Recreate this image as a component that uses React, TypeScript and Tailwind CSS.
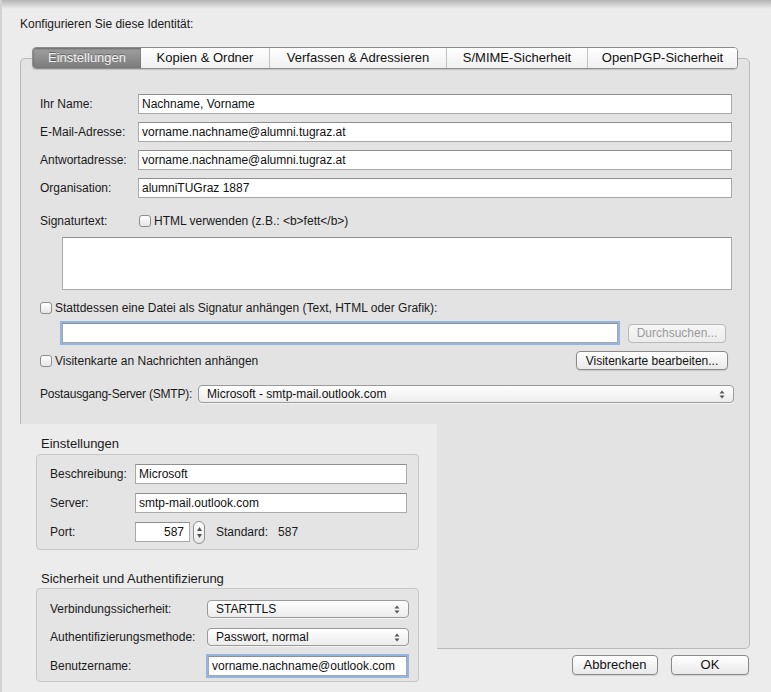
import React from 'react';

const FONT = "font-['Liberation_Sans',Arial,sans-serif]";

function Field({ value, className = '', focus = false, right = false }: { value: string; className?: string; focus?: boolean; right?: boolean }) {
  return (
    <div
      className={`h-[20px] bg-white border border-[#a9a9a9] border-t-[#8f8f8f] px-[3px] text-[12px] leading-[18px] text-[#111] whitespace-nowrap overflow-hidden ${
        right ? 'text-right pr-[5px]' : ''
      } ${focus ? 'border-[#5f93d3] shadow-[0_0_0_2px_rgba(122,166,222,0.75)]' : ''} ${className}`}
    >
      {value}
    </div>
  );
}

function Check() {
  return (
    <span className="inline-block w-[12px] h-[12px] shrink-0 rounded-[3px] border border-[#8c8c8c] bg-gradient-to-b from-white to-[#e6e6e6] shadow-[inset_0_1px_0_#fff]" />
  );
}

function Arrows() {
  return (
    <svg width="6" height="9" viewBox="0 0 6 9" className="shrink-0">
      <path d="M3 0.5 L5.5 3.5 H0.5 Z" fill="#555" />
      <path d="M3 8.5 L5.5 5.5 H0.5 Z" fill="#555" />
    </svg>
  );
}

function Select({ value, className = '' }: { value: string; className?: string }) {
  return (
    <div
      className={`h-[18px] flex items-center justify-between rounded-[4px] border border-[#9a9a9a] bg-gradient-to-b from-white to-[#ececec] shadow-[0_1px_0_rgba(255,255,255,0.6)] pl-[8px] pr-[8px] text-[12px] leading-[16px] text-[#111] ${className}`}
    >
      <span>{value}</span>
      <Arrows />
    </div>
  );
}

function Button({ label, className = '', disabled = false, size = 'text-[12px]' }: { label: string; className?: string; disabled?: boolean; size?: string }) {
  return (
    <div
      className={`h-[19px] flex items-center justify-center rounded-[4px] border ${size} ${
        disabled
          ? 'border-[#b9b9b9] bg-gradient-to-b from-[#f6f6f6] to-[#ececec] text-[#9a9a9a]'
          : 'border-[#8a8a8a] bg-gradient-to-b from-white to-[#e9e9e9] text-[#111] shadow-[0_1px_1px_rgba(0,0,0,0.12)]'
      } ${className}`}
    >
      {label}
    </div>
  );
}

const TABS: { label: string; w: string }[] = [
  { label: 'Einstellungen', w: 'w-[108px]' },
  { label: 'Kopien & Ordner', w: 'w-[128px]' },
  { label: 'Verfassen & Adressieren', w: 'w-[177px]' },
  { label: 'S/MIME-Sicherheit', w: 'w-[141px]' },
  { label: 'OpenPGP-Sicherheit', w: 'w-[150px]' },
];

function Tabs() {
  return (
    <div className="-mt-[12px] ml-[11px] w-[706px] h-[22px] flex rounded-[4px] border border-[#8e8e8e] overflow-hidden shadow-[0_1px_1px_rgba(0,0,0,0.15)]">
      {TABS.map((t, i) => (
        <div
          key={t.label}
          className={`${t.w} h-full flex items-center justify-center text-[13px] leading-[20px] ${
            i === 0
              ? 'bg-gradient-to-b from-[#a0a0a0] to-[#7c7c7c] text-[#f4f4f4] [text-shadow:0_-1px_0_rgba(0,0,0,0.35)] shadow-[inset_0_1px_2px_rgba(0,0,0,0.35)]'
              : 'bg-gradient-to-b from-white to-[#f0f0f0] text-[#111]'
          } ${i > 1 ? 'border-l border-[#c2c2c2]' : ''}`}
        >
          {t.label}
        </div>
      ))}
    </div>
  );
}

const IDENTITY: [string, string][] = [
  ['Ihr Name:', 'Nachname, Vorname'],
  ['E-Mail-Adresse:', 'vorname.nachname@alumni.tugraz.at'],
  ['Antwortadresse:', 'vorname.nachname@alumni.tugraz.at'],
  ['Organisation:', 'alumniTUGraz 1887'],
];

function SmtpPanel() {
  return (
    <div className="absolute left-[1px] top-[424px] w-[434px] h-[268px] bg-[#ececec] text-[12px] text-[#1a1a1a]">
      <div className="pt-[12px] pl-[38px] text-[13px] leading-[16px]">Einstellungen</div>
      <div className="mt-[2px] ml-[33px] w-[383px] rounded-[4px] border border-[#c6c6c6] bg-[#e4e4e4] pl-[13px] pr-[11px] pt-[9px] pb-[7px]">
        <div className="flex flex-col gap-[9px]">
          <div className="flex items-center">
            <span className="w-[85px] shrink-0">Beschreibung:</span>
            <Field value="Microsoft" className="flex-1" />
          </div>
          <div className="flex items-center">
            <span className="w-[85px] shrink-0">Server:</span>
            <Field value="smtp-mail.outlook.com" className="flex-1" />
          </div>
          <div className="flex items-center h-[20px]">
            <span className="w-[85px] shrink-0">Port:</span>
            <Field value="587" right className="w-[55px]" />
            <div className="ml-[3px] w-[12px] h-[23px] rounded-[6px] border border-[#8f8f8f] bg-gradient-to-b from-white to-[#e8e8e8] flex flex-col items-center justify-center gap-[3px]">
              <svg width="5" height="4" viewBox="0 0 5 4"><path d="M2.5 0 L5 4 H0 Z" fill="#555" /></svg>
              <svg width="5" height="4" viewBox="0 0 5 4"><path d="M2.5 4 L5 0 H0 Z" fill="#555" /></svg>
            </div>
            <span className="ml-[11px]">Standard:</span>
            <span className="ml-[10px]">587</span>
          </div>
        </div>
      </div>

      <div className="mt-[21px] pl-[38px] text-[13px] leading-[16px]">Sicherheit und Authentifizierung</div>
      <div className="mt-[1px] ml-[33px] w-[383px] rounded-[4px] border border-[#c6c6c6] bg-[#e4e4e4] pl-[13px] pr-[9px] pt-[11px] pb-[5px]">
        <div className="flex items-center">
          <span className="w-[157px] shrink-0">Verbindungssicherheit:</span>
          <Select value="STARTTLS" className="flex-1" />
        </div>
        <div className="flex items-center mt-[10px]">
          <span className="w-[157px] shrink-0">Authentifizierungsmethode:</span>
          <Select value="Passwort, normal" className="flex-1" />
        </div>
        <div className="flex items-center mt-[10px]">
          <span className="w-[158px] shrink-0">Benutzername:</span>
          <div className="flex-1 mr-[2px] flex">
            <Field value="vorname.nachname@outlook.com" focus className="flex-1" />
          </div>
        </div>
      </div>
    </div>
  );
}

export default function App() {
  return (
    <div className={`relative w-[771px] h-[692px] overflow-hidden bg-[#ececec] ${FONT} text-[12px] text-[#1a1a1a] border-l-[2px] border-[#d2d2d2]`}>
      <div className="absolute inset-x-0 top-0 h-[9px] bg-gradient-to-b from-[#b4b4b4] to-transparent pointer-events-none" />

      <div className="pt-[17px] pl-[18px] leading-[14px]">Konfigurieren Sie diese Identität:</div>

      <div className="mt-[27px] ml-[18px] w-[730px] h-[591px] rounded-[5px] border border-[#b9b9b9] bg-[#e3e3e3]">
        <Tabs />

        <div className="pl-[19px] pr-[17px]">
          <div className="mt-[25px] grid grid-cols-[98px_1fr] gap-y-[8px] items-center">
            {IDENTITY.map(([label, value]) => (
              <React.Fragment key={label}>
                <span className="leading-[14px]">{label}</span>
                <Field value={value} />
              </React.Fragment>
            ))}
          </div>

          <div className="mt-[16px] flex items-center leading-[14px]">
            <span className="w-[99px] shrink-0">Signaturtext:</span>
            <Check />
            <span className="ml-[3px]">HTML verwenden (z.B.: &lt;b&gt;fett&lt;/b&gt;)</span>
          </div>

          <div className="mt-[9px] ml-[22px] h-[53px] bg-white border border-[#a9a9a9] border-t-[#8f8f8f]" />

          <div className="mt-[11px] flex items-center leading-[14px]">
            <Check />
            <span className="ml-[3px]">Stattdessen eine Datei als Signatur anhängen (Text, HTML oder Grafik):</span>
          </div>

          <div className="mt-[8px] ml-[22px] flex items-center">
            <Field value="" focus className="w-[556px]" />
            <Button label="Durchsuchen..." disabled className="ml-[10px] w-[98px] h-[18px]" />
          </div>

          <div className="mt-[8px] flex items-center justify-between leading-[14px]">
            <div className="flex items-center">
              <Check />
              <span className="ml-[3px]">Visitenkarte an Nachrichten anhängen</span>
            </div>
            <Button label="Visitenkarte bearbeiten..." className="mr-[4px] w-[152px]" />
          </div>

          <div className="mt-[15px] flex items-center -mr-[2px]">
            <span className="w-[158px] shrink-0 leading-[14px] tracking-[-0.2px]">Postausgang-Server (SMTP):</span>
            <Select value="Microsoft - smtp-mail.outlook.com" className="flex-1" />
          </div>
        </div>
      </div>

      <div className="mt-[6px] pr-[22px] flex justify-end gap-[13px]">
        <Button label="Abbrechen" size="text-[13px]" className="w-[86px] h-[20px]" />
        <Button label="OK" size="text-[13px]" className="w-[78px] h-[20px]" />
      </div>

      <SmtpPanel />
    </div>
  );
}
